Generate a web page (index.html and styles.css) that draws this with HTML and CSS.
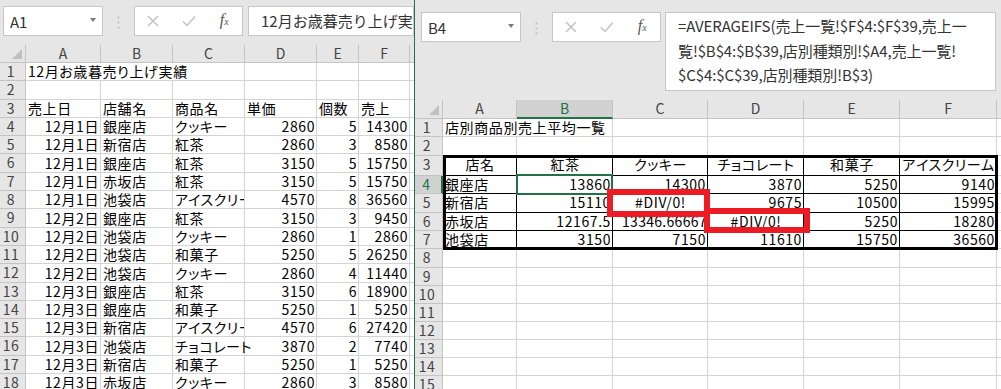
FILE: index.html
```html
<!DOCTYPE html>
<html lang="ja">
<head>
    <meta charset="UTF-8">
    <title>店別商品別売上平均一覧</title>
    <link rel="stylesheet" href="styles.css">
</head>
<body>
<div class="desk">
    <!-- left workbook: 売上一覧 -->
    <div class="win win-left">
        <div class="bar">
            <div class="namebox"><span>A1</span><i class="drop"></i></div>
            <div class="grip"><svg width="3" height="13" viewBox="0 0 3 13"><circle cx="1.5" cy="1.5" r="1.1"/><circle cx="1.5" cy="6.5" r="1.1"/><circle cx="1.5" cy="11.5" r="1.1"/></svg></div>
            <div class="fxbtns">
                <span><svg width="12" height="12" viewBox="0 0 12 12"><path d="M1 1L11 11M11 1L1 11"/></svg></span>
                <span><svg width="14" height="12" viewBox="0 0 14 12"><path d="M1 6.5L5 10.5L13 1.5"/></svg></span>
                <span class="fx"><i>f</i><b>x</b></span>
            </div>
            <div class="formula">12月お歳暮売り上げ実績</div>
        </div>
        <div class="sheet sheet-left">
            <div class="hd corner"></div><div class="hd">A</div><div class="hd">B</div><div class="hd">C</div><div class="hd">D</div><div class="hd">E</div><div class="hd">F</div><div class="hd"></div>
            <div class="rh">1</div><div class="c span3">12月お歳暮売り上げ実績</div><div class="c"></div><div class="c"></div><div class="c"></div><div class="c"></div>
            <div class="rh">2</div><div class="c"></div><div class="c"></div><div class="c"></div><div class="c"></div><div class="c"></div><div class="c"></div><div class="c"></div>
            <div class="rh">3</div><div class="c">売上日</div><div class="c">店舗名</div><div class="c">商品名</div><div class="c">単価</div><div class="c">個数</div><div class="c">売上</div><div class="c"></div>
            <div class="rh">4</div><div class="c n">12月1日</div><div class="c">銀座店</div><div class="c">クッキー</div><div class="c n">2860</div><div class="c n">5</div><div class="c n">14300</div><div class="c"></div>
            <div class="rh">5</div><div class="c n">12月1日</div><div class="c">新宿店</div><div class="c">紅茶</div><div class="c n">2860</div><div class="c n">3</div><div class="c n">8580</div><div class="c"></div>
            <div class="rh">6</div><div class="c n">12月1日</div><div class="c">銀座店</div><div class="c">紅茶</div><div class="c n">3150</div><div class="c n">5</div><div class="c n">15750</div><div class="c"></div>
            <div class="rh">7</div><div class="c n">12月1日</div><div class="c">赤坂店</div><div class="c">紅茶</div><div class="c n">3150</div><div class="c n">5</div><div class="c n">15750</div><div class="c"></div>
            <div class="rh">8</div><div class="c n">12月1日</div><div class="c">池袋店</div><div class="c clip">アイスクリーム</div><div class="c n">4570</div><div class="c n">8</div><div class="c n">36560</div><div class="c"></div>
            <div class="rh">9</div><div class="c n">12月2日</div><div class="c">銀座店</div><div class="c">紅茶</div><div class="c n">3150</div><div class="c n">3</div><div class="c n">9450</div><div class="c"></div>
            <div class="rh">10</div><div class="c n">12月2日</div><div class="c">池袋店</div><div class="c">クッキー</div><div class="c n">2860</div><div class="c n">1</div><div class="c n">2860</div><div class="c"></div>
            <div class="rh">11</div><div class="c n">12月2日</div><div class="c">池袋店</div><div class="c">和菓子</div><div class="c n">5250</div><div class="c n">5</div><div class="c n">26250</div><div class="c"></div>
            <div class="rh">12</div><div class="c n">12月2日</div><div class="c">池袋店</div><div class="c">クッキー</div><div class="c n">2860</div><div class="c n">4</div><div class="c n">11440</div><div class="c"></div>
            <div class="rh">13</div><div class="c n">12月3日</div><div class="c">銀座店</div><div class="c">紅茶</div><div class="c n">3150</div><div class="c n">6</div><div class="c n">18900</div><div class="c"></div>
            <div class="rh">14</div><div class="c n">12月3日</div><div class="c">銀座店</div><div class="c">和菓子</div><div class="c n">5250</div><div class="c n">1</div><div class="c n">5250</div><div class="c"></div>
            <div class="rh">15</div><div class="c n">12月3日</div><div class="c">新宿店</div><div class="c clip">アイスクリーム</div><div class="c n">4570</div><div class="c n">6</div><div class="c n">27420</div><div class="c"></div>
            <div class="rh">16</div><div class="c n">12月3日</div><div class="c">池袋店</div><div class="c">チョコレート</div><div class="c n">3870</div><div class="c n">2</div><div class="c n">7740</div><div class="c"></div>
            <div class="rh">17</div><div class="c n">12月3日</div><div class="c">新宿店</div><div class="c">和菓子</div><div class="c n">5250</div><div class="c n">1</div><div class="c n">5250</div><div class="c"></div>
            <div class="rh">18</div><div class="c n">12月3日</div><div class="c">赤坂店</div><div class="c">クッキー</div><div class="c n">2860</div><div class="c n">3</div><div class="c n">8580</div><div class="c"></div>
        </div>
    </div>

    <!-- right workbook: 店別種類別 -->
    <div class="win win-right">
        <div class="bar">
            <div class="namebox"><span>B4</span><i class="drop"></i></div>
            <div class="grip"><svg width="3" height="13" viewBox="0 0 3 13"><circle cx="1.5" cy="1.5" r="1.1"/><circle cx="1.5" cy="6.5" r="1.1"/><circle cx="1.5" cy="11.5" r="1.1"/></svg></div>
            <div class="fxbtns">
                <span><svg width="12" height="12" viewBox="0 0 12 12"><path d="M1 1L11 11M11 1L1 11"/></svg></span>
                <span><svg width="14" height="12" viewBox="0 0 14 12"><path d="M1 6.5L5 10.5L13 1.5"/></svg></span>
                <span class="fx"><i>f</i><b>x</b></span>
            </div>
            <div class="formula formula-tall">=AVERAGEIFS(売上一覧!$F$4:$F$39,売上一<br>覧!$B$4:$B$39,店別種類別!$A4,売上一覧!<br>$C$4:$C$39,店別種類別!B$3)</div>
        </div>
        <div class="sheet sheet-right">
            <div class="hd corner"></div><div class="hd">A</div><div class="hd on">B</div><div class="hd">C</div><div class="hd">D</div><div class="hd">E</div><div class="hd">F</div><div class="hd"></div>
            <div class="rh">1</div><div class="c span2">店別商品別売上平均一覧</div><div class="c"></div><div class="c"></div><div class="c"></div><div class="c"></div><div class="c"></div>
            <div class="rh">2</div><div class="c"></div><div class="c"></div><div class="c"></div><div class="c"></div><div class="c"></div><div class="c"></div><div class="c"></div>
            <div class="rh">3</div><div class="c tb m">店名</div><div class="c tb m">紅茶</div><div class="c tb m">クッキー</div><div class="c tb m">チョコレート</div><div class="c tb m">和菓子</div><div class="c tb m">アイスクリーム</div><div class="c"></div>
            <div class="rh on">4</div><div class="c tb">銀座店</div><div class="c tb n">13860</div><div class="c tb n">14300</div><div class="c tb n">3870</div><div class="c tb n">5250</div><div class="c tb n">9140</div><div class="c"></div>
            <div class="rh">5</div><div class="c tb">新宿店</div><div class="c tb n">15110</div><div class="c tb m">#DIV/0!</div><div class="c tb n">9675</div><div class="c tb n">10500</div><div class="c tb n">15995</div><div class="c"></div>
            <div class="rh">6</div><div class="c tb">赤坂店</div><div class="c tb n">12167.5</div><div class="c tb clip cut">13346.66667</div><div class="c tb m">#DIV/0!</div><div class="c tb n">5250</div><div class="c tb n">18280</div><div class="c"></div>
            <div class="rh">7</div><div class="c tb">池袋店</div><div class="c tb n">3150</div><div class="c tb n">7150</div><div class="c tb n">11610</div><div class="c tb n">15750</div><div class="c tb n">36560</div><div class="c"></div>
            <div class="rh">8</div><div class="c"></div><div class="c"></div><div class="c"></div><div class="c"></div><div class="c"></div><div class="c"></div><div class="c"></div>
            <div class="rh">9</div><div class="c"></div><div class="c"></div><div class="c"></div><div class="c"></div><div class="c"></div><div class="c"></div><div class="c"></div>
            <div class="rh">10</div><div class="c"></div><div class="c"></div><div class="c"></div><div class="c"></div><div class="c"></div><div class="c"></div><div class="c"></div>
            <div class="rh">11</div><div class="c"></div><div class="c"></div><div class="c"></div><div class="c"></div><div class="c"></div><div class="c"></div><div class="c"></div>
            <div class="rh">12</div><div class="c"></div><div class="c"></div><div class="c"></div><div class="c"></div><div class="c"></div><div class="c"></div><div class="c"></div>
            <div class="rh">13</div><div class="c"></div><div class="c"></div><div class="c"></div><div class="c"></div><div class="c"></div><div class="c"></div><div class="c"></div>
            <div class="rh">14</div><div class="c"></div><div class="c"></div><div class="c"></div><div class="c"></div><div class="c"></div><div class="c"></div><div class="c"></div>
            <div class="rh">15</div><div class="c"></div><div class="c"></div><div class="c"></div><div class="c"></div><div class="c"></div><div class="c"></div><div class="c"></div>
        </div>
        <!-- borders, selection and the red marks drawn over the grid -->
        <div class="thick"></div>
        <div class="sel"></div>
        <div class="mark mark-1"></div>
        <div class="mark mark-2"></div>
    </div>
</div>
</body>
</html>
```

FILE: styles.css
```css
* {
    box-sizing: border-box;
}
body {
    margin: 0;
    width: 1001px;
    height: 389px;
    overflow: hidden;
    background-color: #ffffff;
    font-family: "Noto Sans CJK JP", "Noto Sans", sans-serif;
    color: #000;
}
.desk {
    display: flex;
    height: 389px;
}
.win {
    position: relative;
    height: 389px;
    overflow: hidden;
    background-color: #e6e6e6;
}
.win-left {
    width: 414px;
}
.win-right {
    width: 587px;
    border-left: 1px solid #217346;
}

/* formula bar */
.bar {
    display: flex;
    align-items: flex-start;
}
.win-left .bar {
    height: 45px;
    padding: 6px 0 0 3px;
}
.win-right .bar {
    height: 100px;
    padding: 12px 0 0 6px;
}
.namebox {
    width: 100px;
    height: 30px;
    background-color: #fff;
    border: 1px solid #c6c6c6;
    display: flex;
    align-items: center;
    justify-content: space-between;
    padding: 1px 6px 0 6px;
    font-size: 15px;
    color: #333;
}
.drop {
    width: 0;
    height: 0;
    border-left: 3.5px solid transparent;
    border-right: 3.5px solid transparent;
    border-top: 4px solid #7a7a7a;
    margin-top: -3px;
}
.grip {
    width: 31px;
    display: flex;
    justify-content: center;
    padding-top: 10px;
}
.grip svg {
    fill: #bdbdbd;
}
.fxbtns {
    width: 109px;
    height: 30px;
    background-color: #fff;
    border: 1px solid #c6c6c6;
    display: flex;
    align-items: center;
}
.fxbtns span {
    width: 36px;
    display: flex;
    justify-content: center;
}
.fxbtns svg path {
    fill: none;
    stroke: #c2c2c2;
    stroke-width: 1.5;
}
.fxbtns .fx {
    font-family: "Liberation Serif", serif;
    color: #555;
    align-items: baseline;
    margin-top: -2px;
}
.fx i {
    font-size: 16px;
    font-style: italic;
}
.fx b {
    font-size: 10px;
    font-weight: normal;
    font-style: italic;
}
.formula {
    flex: 1;
    height: 30px;
    margin-left: 5px;
    background-color: #fff;
    border: 1px solid #c6c6c6;
    padding: 2px 0 0 12px;
    font-size: 15px;
    line-height: 24px;
    color: #333;
    white-space: nowrap;
    overflow: hidden;
}
.formula-tall {
    flex: none;
    width: 331px;
    height: 79px;
    margin-left: 4px;
    line-height: 24.5px;
    padding-top: 1px;
    letter-spacing: -0.1px;
}

/* worksheet grid */
.sheet {
    display: grid;
    background-color: #fff;
}
.sheet-left {
    grid-template-columns: 26px 75px 72px 72px 72px 42px 51px 20px;
    grid-template-rows: 18px;
    grid-auto-rows: 18.3px;
}
.sheet-right {
    grid-template-columns: 28px 74px 96px 95px 96px 96px 97px 20px;
    grid-template-rows: 18.5px 18.5px 19px 19.5px 18.5px 18.5px 18.5px 18px 18.5px;
    grid-auto-rows: 18px;
}
.hd, .rh {
    background-color: #e6e6e6;
    border-right: 1px solid #c4c4c4;
    border-bottom: 1px solid #c4c4c4;
    color: #444;
    font-size: 14px;
    line-height: 17px;
    text-align: center;
}
.rh {
    padding-right: 3px;
    letter-spacing: 0.5px;
}
.corner {
    position: relative;
}
.corner::after {
    content: "";
    position: absolute;
    right: 3px;
    bottom: 3px;
    border-left: 10px solid transparent;
    border-bottom: 10px solid #c0c0c0;
}
.hd.on {
    background-color: #d2d2d2;
    color: #217346;
    border-bottom: 2px solid #217346;
}
.rh.on {
    background-color: #d2d2d2;
    color: #217346;
    border-right: 2px solid #217346;
}
.c {
    border-right: 1px solid #d4d4d4;
    border-bottom: 1px solid #d4d4d4;
    font-size: 14px;
    letter-spacing: 0.6px;
    line-height: 17px;
    padding: 0.3px 1px 0 2px;
    white-space: nowrap;
    font-feature-settings: "palt";
}
.c.clip {
    overflow: hidden;
}
.c.n {
    text-align: right;
    padding-right: 1px;
}
.c.m {
    text-align: center;
}
.c.span3 {
    grid-column: span 3;
}
.c.span2 {
    grid-column: span 2;
}
.c.tb {
    border-color: #000;
}
.c.cut {
    padding-left: 9px;
    letter-spacing: 0.3px;
}

/* overlays */
.thick {
    position: absolute;
    left: 28px;
    top: 155px;
    width: 555px;
    height: 95px;
    border: 3px solid #000;
}
.sel {
    position: absolute;
    left: 101px;
    top: 173.5px;
    width: 97px;
    height: 21px;
    border: 2px solid #217346;
}
.mark {
    position: absolute;
    border: 6.5px solid #ed1c24;
}
.mark-1 {
    left: 192px;
    top: 189px;
    width: 103px;
    height: 28px;
}
.mark-2 {
    left: 289px;
    top: 207.5px;
    width: 106px;
    height: 25px;
}
```
